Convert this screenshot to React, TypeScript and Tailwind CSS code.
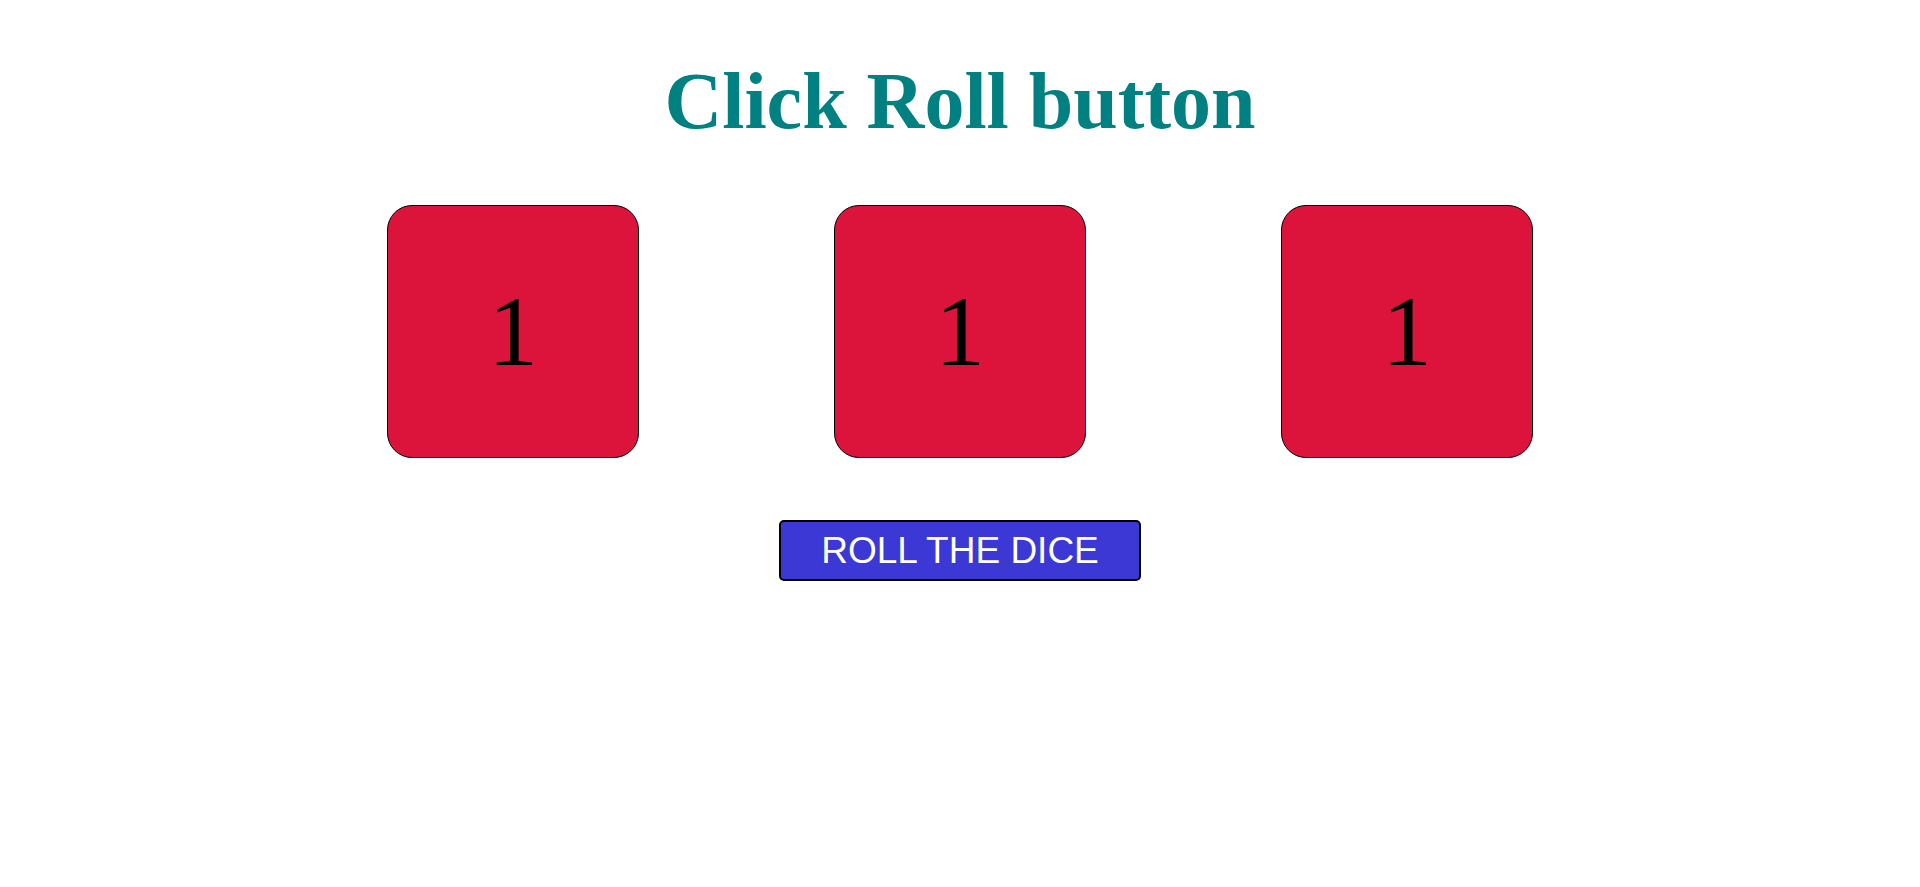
import { useState } from "react";

// three dice and a roll button
export default function App() {
  const [dice, setDice] = useState([1, 1, 1]);

  function roll() {
    setDice(dice.map(() => Math.floor(Math.random() * 6) + 1));
  }

  return (
    <div className="min-h-[887px] bg-white flex flex-col items-center">
      <h1 className="mt-[55px] text-[80px] leading-[92px] font-bold text-[#008080] font-['Liberation_Serif','Times_New_Roman',serif]">
        Click Roll button
      </h1>
      <div className="mt-[58px] flex justify-center gap-[195px]">
        {dice.map((d, i) => (
          <div
            key={i}
            className="w-[252px] h-[253px] rounded-[25px] border border-black bg-[#dc143c] flex items-center justify-center text-[100px] text-black font-['Liberation_Serif','Times_New_Roman',serif]"
          >
            {d}
          </div>
        ))}
      </div>
      <button
        type="button"
        onClick={roll}
        className="mt-[62px] w-[362px] h-[61px] rounded-[5px] border-2 border-black bg-[#3b38d6] text-white text-[37px] leading-none font-['Liberation_Sans',Arial,sans-serif]"
      >
        ROLL THE DICE
      </button>
    </div>
  );
}
